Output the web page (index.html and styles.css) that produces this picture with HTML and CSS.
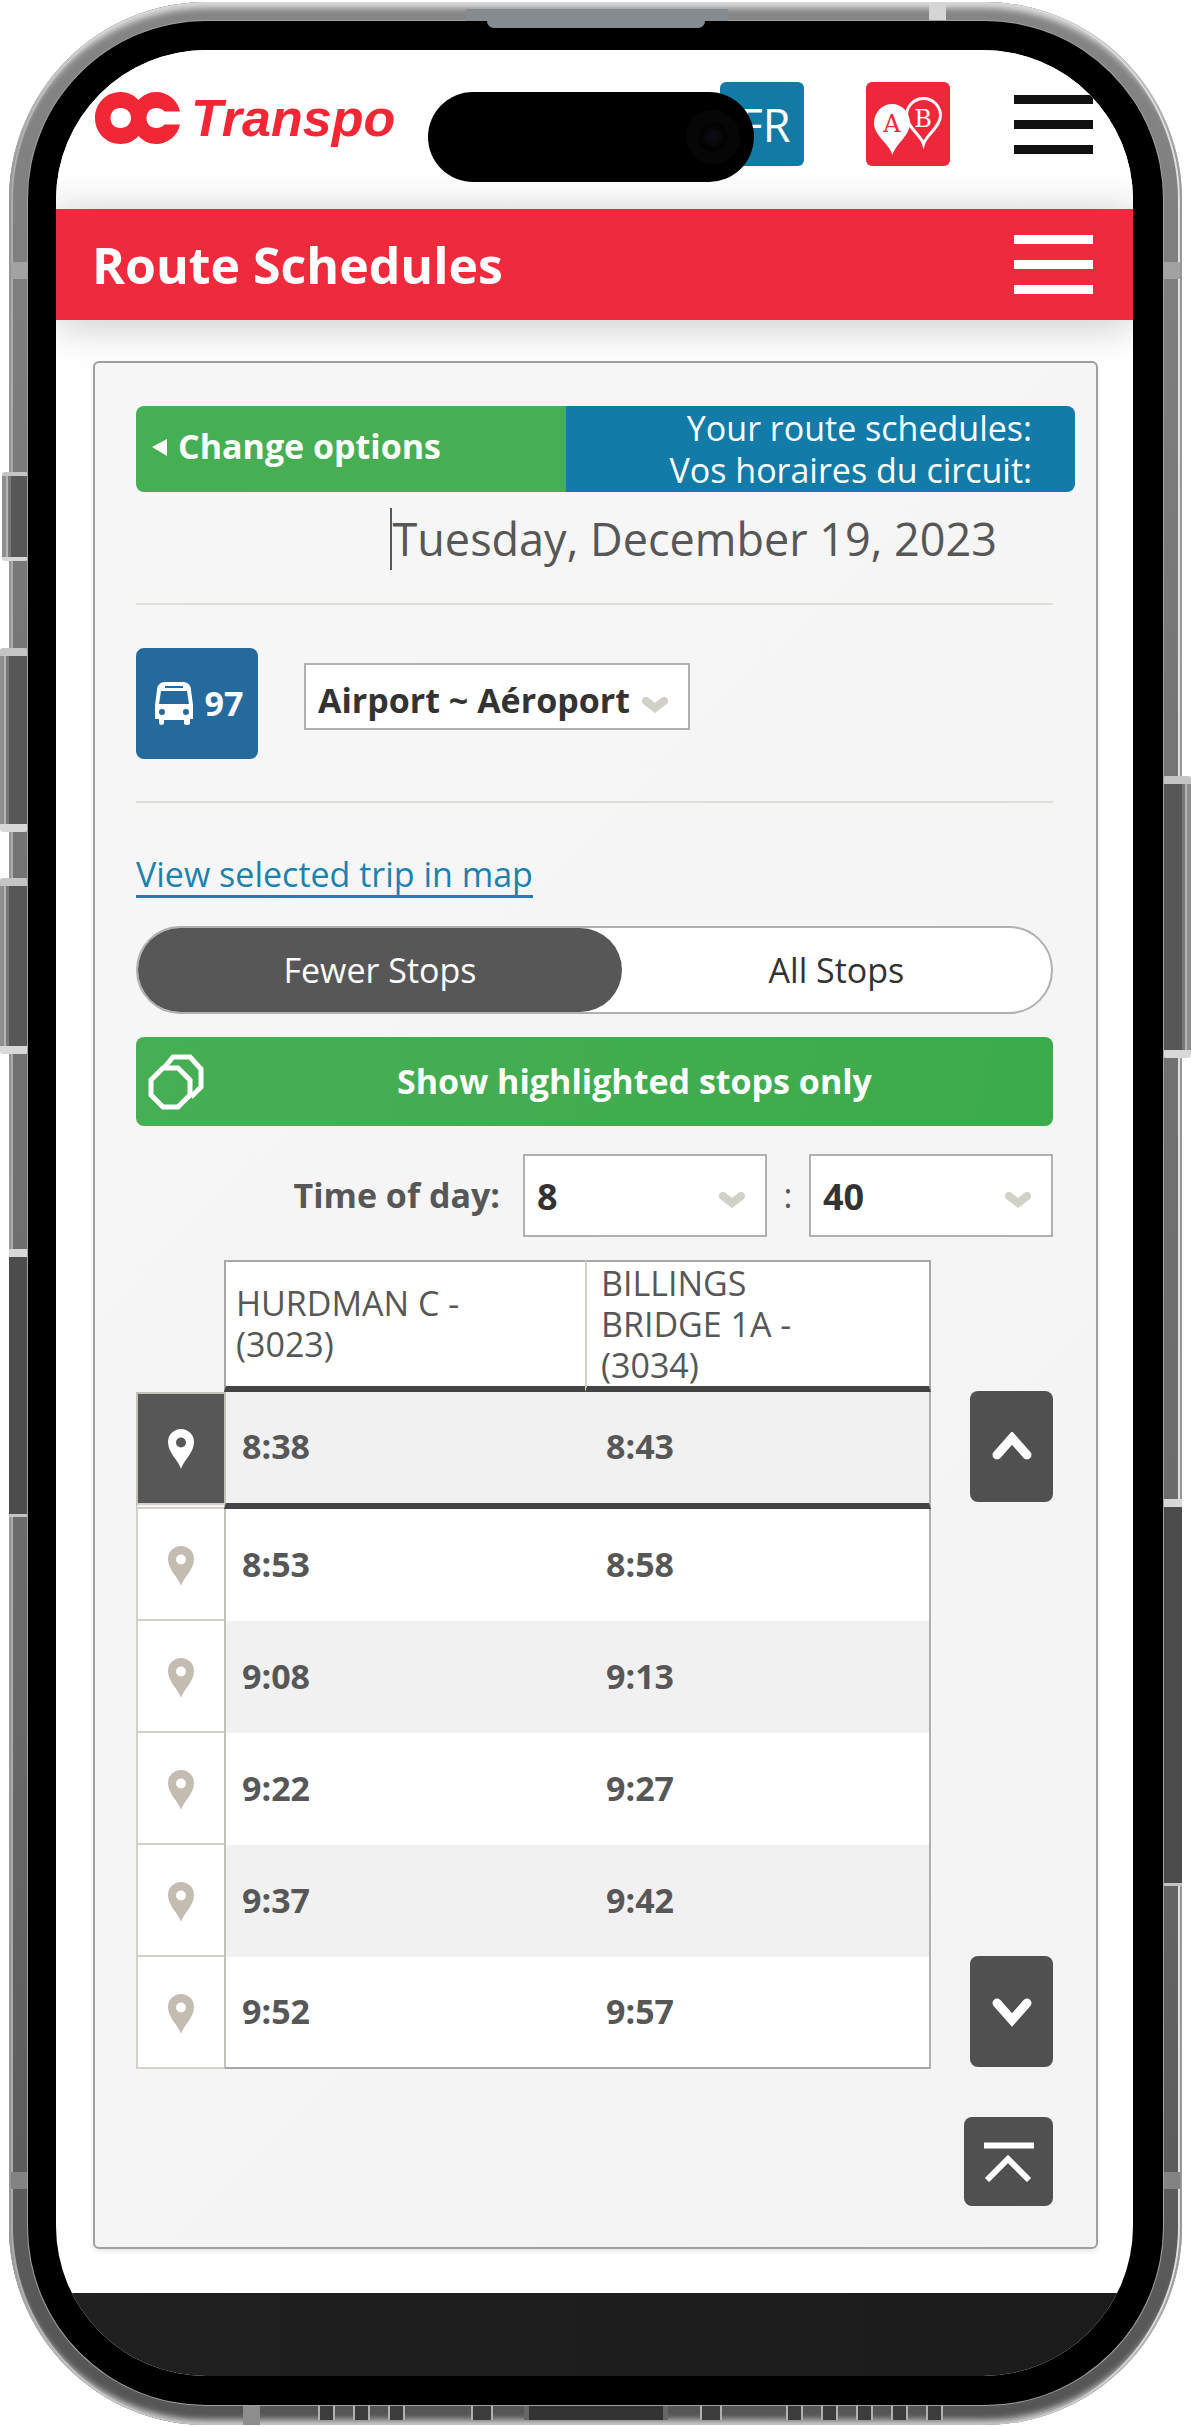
FILE: index.html
```html
<!DOCTYPE html>
<html lang="en">
<head>
<meta charset="utf-8">
<meta name="viewport" content="width=device-width, initial-scale=1">
<title>Route Schedules - OC Transpo</title>
<link rel="stylesheet" href="styles.css">
</head>
<body>
<div class="phone">
  <span class="key key-action"></span>
  <span class="key key-up"></span>
  <span class="key key-down"></span>
  <span class="key key-power"></span>
  <span class="shade shade-left"></span>
  <span class="shade shade-right"></span>
  <span class="band band-l1"></span>
  <span class="band band-l2"></span>
  <span class="band band-r1"></span>
  <span class="band band-r2"></span>
  <span class="band band-top"></span>
  <span class="band band-bottom"></span>
  <span class="ports"><i></i><i></i><i></i><i class="screw"></i><i class="usb"></i><i class="screw"></i><i></i><i></i><i></i><i></i><i></i></span>
  <div class="bezel">
    <span class="speaker"></span>
    <span class="speaker-lip"></span>
    <div class="screen">
      <header class="site-header">
        <a class="logo" href="#" aria-label="OC Transpo">
          <svg class="logo-mark" viewBox="0 0 86 52" aria-hidden="true">
            <path fill="#f22735" fill-rule="evenodd" d="M25.500 0C33 0 39 3 43.500 8C48 3 54 0 61 0C73 0 82.500 8 85 19.500H69.500C67.500 17.200 65 16 61.500 16C55.500 16 51.500 20 51.500 26C51.500 32 55.500 36 61.500 36C65 36 67.500 34.800 69.500 32.500H85C82.500 44 73 52 61 52C54 52 48 49 43.500 44C39 49 33 52 25.500 52C11 52 0 40.500 0 26C0 11.500 11 0 25.500 0ZM25.500 16C19.500 16 15.500 20 15.500 26C15.500 32 19.500 36 25.500 36C31.500 36 36 32 36 26C36 20 31.500 16 25.500 16Z"/>
          </svg>
          <span class="logo-word">Transpo</span>
        </a>
        <button class="lang" type="button">FR</button>
        <button class="planner" type="button" aria-label="Travel planner">
          <svg viewBox="0 0 84 84" aria-hidden="true">
            <path d="M57.500 62C55 53 40.500 45 40.500 33.500A17 17 0 0 1 74.500 33.500C74.500 45 60 53 57.500 62Z" fill="none" stroke="#fff" stroke-width="3"/>
            <path d="M26.500 73C23 61 8 54 8 41A18 19 0 0 1 44 41C44 54 30 61 26.500 73Z" fill="#fff"/>
            <text class="pin-letter" x="26" y="50" fill="#ee273a">A</text>
            <text class="pin-letter" x="57" y="45" fill="#fff">B</text>
          </svg>
        </button>
        <button class="burger burger-dark" type="button" aria-label="Main menu"><span></span><span></span><span></span></button>
      </header>
      <div class="title-bar">
        <h1>Route Schedules</h1>
        <button class="burger" type="button" aria-label="Section menu"><span></span><span></span><span></span></button>
      </div>
      <main>
        <section class="panel">
          <div class="options-bar">
            <a class="change" href="#"><svg viewBox="0 0 18 20" aria-hidden="true"><path d="M2 11 17 3V20Z" fill="#fff"/></svg>Change options</a>
            <p class="intro">Your route schedules:<br>Vos horaires du circuit:</p>
          </div>
          <p class="date"><span>Tuesday, December 19, 2023</span></p>
          <div class="route">
            <span class="badge">
              <svg viewBox="0 0 38 43" aria-hidden="true">
                <path fill="#fff" fill-rule="evenodd" d="M9 0H29C34 1 36 4 36 8L38 23V37H35V41Q35 43 32 43Q29 43 29 41V38H9V41Q9 43 6.500 43Q4 43 4 41V37H0V23L2 8C2 4 4 1 9 0ZM10 4V6H28V4ZM6 9 4 22H34L32 9ZM7 27A3 3 0 1 0 7 33A3 3 0 1 0 7 27ZM31 27A3 3 0 1 0 31 33A3 3 0 1 0 31 27Z"/>
              </svg>
              97
            </span>
            <select class="select direction" aria-label="Direction"><option>Airport ~ Aéroport</option></select>
          </div>
          <a class="map-link" href="#">View selected trip in map</a>
          <div class="toggle" role="radiogroup" aria-label="Stops shown">
            <input type="radio" name="stops" id="fewer" checked><label for="fewer">Fewer Stops</label>
            <input type="radio" name="stops" id="all"><label for="all">All Stops</label>
          </div>
          <button class="highlight" type="button">
            <svg viewBox="0 0 56 56" aria-hidden="true">
              <path d="M16 14 25 3H42L53 15V33L43 43" fill="none" stroke="#fff" stroke-width="5"/>
              <path d="M15 14H30L42 26V41L30 53H15L3 41V26Z" fill="none" stroke="#fff" stroke-width="5"/>
            </svg>
            <span>Show highlighted stops only</span>
          </button>
          <div class="time">
            <label for="hour">Time of day:</label>
            <select class="select" id="hour"><option>8</option></select>
            <span>:</span>
            <select class="select" id="minute" aria-label="Minutes"><option>40</option></select>
          </div>
          <div class="schedule">
            <table>
              <thead>
                <tr><td class="corner"></td><th scope="col">HURDMAN C - (3023)</th><th scope="col">BILLINGS BRIDGE 1A - (3034)</th></tr>
              </thead>
              <tbody>
                <tr class="selected"><td class="pin"><button type="button" aria-label="Trip 8:38"><svg viewBox="0 0 26 40"><use href="#pin"/></svg></button></td><td>8:38</td><td>8:43</td></tr>
                <tr><td class="pin"><button type="button" aria-label="Trip 8:53"><svg viewBox="0 0 26 40"><use href="#pin"/></svg></button></td><td>8:53</td><td>8:58</td></tr>
                <tr><td class="pin"><button type="button" aria-label="Trip 9:08"><svg viewBox="0 0 26 40"><use href="#pin"/></svg></button></td><td>9:08</td><td>9:13</td></tr>
                <tr><td class="pin"><button type="button" aria-label="Trip 9:22"><svg viewBox="0 0 26 40"><use href="#pin"/></svg></button></td><td>9:22</td><td>9:27</td></tr>
                <tr><td class="pin"><button type="button" aria-label="Trip 9:37"><svg viewBox="0 0 26 40"><use href="#pin"/></svg></button></td><td>9:37</td><td>9:42</td></tr>
                <tr><td class="pin"><button type="button" aria-label="Trip 9:52"><svg viewBox="0 0 26 40"><use href="#pin"/></svg></button></td><td>9:52</td><td>9:57</td></tr>
              </tbody>
            </table>
            <div class="steps">
              <button class="step" type="button" aria-label="Earlier trips"><svg viewBox="0 0 40 30"><path d="M5 23 20 6 35 23"/></svg></button>
              <button class="step" type="button" aria-label="Later trips"><svg viewBox="0 0 40 30"><path d="M5 6 20 23 35 6"/></svg></button>
            </div>
          </div>
          <button class="top" type="button" aria-label="Back to top"><svg viewBox="0 0 50 40"><path d="M0 3.500H50M3 38 24 17 45 38"/></svg></button>
        </section>
      </main>
      <footer></footer>
    </div>
    <span class="island"><i></i></span>
  </div>
</div>
<svg class="defs" aria-hidden="true">
  <symbol id="pin" viewBox="0 0 26 40"><path fill-rule="evenodd" d="M13 40C11 32 0 24 0 13A13 13 0 0 1 26 13C26 24 15 32 13 40ZM13 8.500A5 5 0 1 0 13 18.500A5 5 0 1 0 13 8.500Z"/></symbol>
</svg>
</body>
</html>
```
FILE: styles.css
```css
* { box-sizing: border-box; }

body {
  margin: 0;
  padding: 2px 9px 0;
  background: #fff;
  color: #575757;
  font: 400 34px/41px "Open Sans", "Noto Sans", sans-serif;
}

h1, p { margin: 0; }
button { margin: 0; padding: 0; border: 0; font: inherit; cursor: pointer; }
svg { display: block; }
.defs { position: absolute; width: 0; height: 0; }

/* Phone body */
.phone {
  position: relative;
  padding: 19px 19px 20px;
  border-radius: 198px;
  background: linear-gradient(#858585, #757575 30%, #696969 70%, #555);
  box-shadow:
    inset 0 10px 6px -4px #dcdcdc,
    inset 0 -8px 6px -3px #cfcfcf,
    inset 2px 0 0 #8a8a8a,
    inset 4px 0 0 #aaa,
    inset -2px 0 0 #8a8a8a,
    inset -4px 0 0 #e0e0e0;
}
.bezel {
  position: relative;
  padding: 29px 30px 29px 28px;
  border-radius: 178px;
  background: #000;
  box-shadow: 0 0 0 1px #a0a0a0;
}
.screen {
  border-radius: 150px;
  overflow: hidden;
  background: #fff;
}

.key, .shade, .band, .ports, .speaker, .speaker-lip, .island { position: absolute; }
.key {
  border-top: 8px solid #c5c5c5;
  border-bottom: 8px solid #d8d8d8;
  border-radius: 3px;
  background: linear-gradient(90deg, #8e8e8e 0 4px, #b5b5b5 4px 6px, #777 6px 9px, #575757 9px);
}
.key-action { left: -7px; top: 470px; width: 26px; height: 89px; border-width: 4px 0; }
.key-up { left: -9px; top: 646px; width: 28px; height: 184px; }
.key-down { left: -9px; top: 876px; width: 28px; height: 176px; }
.key-power { right: -9px; top: 774px; width: 28px; height: 282px; transform: scaleX(-1); }
.shade {
  width: 19px;
  border-top: 8px solid #d8d8d8;
  border-bottom: 3px solid #c4c4c4;
  background: #4c4c4c;
}
.shade-left { left: 0; top: 1247px; height: 268px; }
.shade-right { right: 0; top: 1497px; height: 387px; }
.band { background: #a2a2a2; }
.band-l1, .band-l2, .band-r1, .band-r2 { width: 17px; height: 17px; }
.band-l1, .band-l2 { left: 2px; }
.band-r1, .band-r2 { right: 2px; }
.band-l1, .band-r1 { top: 260px; }
.band-l2, .band-r2 { bottom: 236px; background: #838383; }
.band-top { right: 236px; top: 0; width: 17px; height: 20px; background: #d5d5d5; }
.band-bottom { left: 234px; bottom: 0; width: 17px; height: 20px; background: #8e8e8e; }
.ports {
  left: 309px;
  bottom: 5px;
  height: 15px;
  display: flex;
  gap: 18px;
}
.ports i { width: 17px; border: solid #b0b0b0; border-width: 0 2px; background: #3c3c3c; }
.ports .screw { width: 22px; margin: 0 13px 0 48px; }
.ports .usb { width: 144px; border-width: 0 5px; border-color: #666; background: #333; }
.ports .usb + .screw { margin: 0 46px 0 14px; }

.speaker {
  left: calc(50% - 130px);
  top: -12px;
  width: 262px;
  height: 12px;
  background: #868b8f;
}
.speaker-lip {
  left: calc(50% - 109px);
  top: 0;
  width: 218px;
  height: 7px;
  border-radius: 0 0 7px 7px;
  background: #868b8f;
}
.island {
  left: calc(50% - 168px);
  top: 71px;
  width: 326px;
  height: 90px;
  border-radius: 45px;
  background: #000;
}
.island i {
  position: absolute;
  right: 14px;
  top: 18px;
  width: 54px;
  height: 54px;
  border-radius: 50%;
  background: radial-gradient(circle, #0b0a12 0 5px, #020203 11px 13px, #060606 16px);
}

/* Header */
.site-header {
  display: flex;
  align-items: flex-start;
  padding: 32px 40px 43px 39px;
  background: linear-gradient(#fff 75%, #f8f8f8);
}
.logo {
  display: flex;
  align-items: center;
  gap: 10px;
  margin-right: auto;
  padding-top: 6px;
  color: #f22735;
  text-decoration: none;
}
.logo-mark { width: 86px; height: 52px; }
.logo-word { font: italic 700 52px/60px "Liberation Sans", Arial, sans-serif; }
.lang, .planner { width: 84px; height: 84px; border-radius: 6px; color: #fff; }
.lang { margin-right: 62px; padding-left: 6px; background: #137aa6; font-size: 45px; }
.planner { margin-right: 64px; background: #ee273a; }
.pin-letter { font: 24px "DejaVu Serif", serif; text-anchor: middle; }
.burger {
  display: flex;
  flex-direction: column;
  justify-content: center;
  gap: 16px;
  width: 79px;
  height: 84px;
  background: none;
}
.burger span { height: 9px; background: #fff; }
.burger-dark span { background: #111; }

.title-bar {
  position: relative;
  display: flex;
  align-items: center;
  justify-content: space-between;
  height: 111px;
  padding: 0 40px 0 36px;
  background: #ef2a3c;
  box-shadow: 0 8px 40px rgba(0, 0, 0, .2);
}
h1 { color: #fff; font-size: 50px; line-height: 60px; }

/* Panel */
main { padding: 41px 35px 44px 37px; }
.panel {
  padding: 43px 43px 41px 41px;
  border: 2px solid #a0a0a0;
  border-radius: 6px;
  background: linear-gradient(135deg, #f7f7f7, #f3f3f3);
  box-shadow: 0 3px 4px rgba(0, 0, 0, .08);
}
.options-bar {
  display: grid;
  grid-template-columns: 430fr 509fr;
  height: 86px;
  margin-right: -22px;
  border-radius: 8px;
  overflow: hidden;
  color: #fff;
}
.change {
  display: flex;
  align-items: center;
  gap: 10px;
  padding: 0 0 6px 14px;
  background: #46af54;
  color: #fff;
  font-weight: 700;
  text-decoration: none;
}
.change svg { width: 18px; height: 20px; }
.intro { padding: 1px 43px 0 0; background: #127ba7; line-height: 42px; text-align: right; }
.date {
  padding: 16px 56px 33px 0;
  border-bottom: 2px solid #deddd8;
  font-size: 45px;
  line-height: 62px;
  text-align: right;
}
.date span { display: inline-block; border-left: 2px solid #575757; }
.route {
  display: flex;
  align-items: center;
  gap: 46px;
  padding: 43px 0 42px;
  border-bottom: 2px solid #deddd8;
}
.badge {
  display: flex;
  align-items: center;
  justify-content: center;
  gap: 12px;
  width: 122px;
  height: 111px;
  padding-left: 4px;
  border-radius: 8px;
  background: #256a9c;
  color: #fff;
  font-weight: 700;
}
.badge svg { width: 38px; height: 43px; }
.select {
  appearance: none;
  width: 244px;
  height: 83px;
  margin: 0;
  padding: 2px 12px 0;
  border: 2px solid #b0b0b0;
  border-radius: 0;
  color: #333;
  font: 700 36px/46px "Open Sans", "Noto Sans", sans-serif;
  background: #fff url("data:image/svg+xml,%3Csvg xmlns='http://www.w3.org/2000/svg' width='26' height='16'%3E%3Cpath d='M4 4 13 11 22 4' fill='none' stroke='%23d3d0c8' stroke-width='8' stroke-linecap='round'/%3E%3C/svg%3E") no-repeat right 20px top 36px;
}
.direction {
  width: 386px;
  height: 67px;
  margin-bottom: 14px;
  padding-top: 6px;
  font-size: 34px;
  background-position: right 20px top 32px;
}

.map-link {
  display: table;
  margin: 50px 0 28px;
  border-bottom: 3px solid #1b82ad;
  color: #1b82ad;
  line-height: 42px;
  text-decoration: none;
}
.toggle {
  display: flex;
  height: 88px;
  border: 2px solid #b0b0b0;
  border-radius: 44px;
  background: #fff;
  color: #333;
}
.toggle input { position: absolute; opacity: 0; }
.toggle label {
  flex: 430;
  display: flex;
  align-items: center;
  justify-content: center;
  border-radius: 42px;
}
.toggle label:first-of-type { flex: 485; }
.toggle input:checked + label { background: #575757; color: #fff; }
.highlight {
  display: flex;
  align-items: center;
  width: 100%;
  height: 89px;
  margin-top: 23px;
  padding-left: 12px;
  border-radius: 8px;
  background: linear-gradient(100deg, #46af54, #3cab4b);
  color: #fff;
  font-weight: 700;
}
.highlight svg { width: 56px; height: 56px; }
.highlight span { flex: 1; padding-left: 12px; }
.time {
  display: flex;
  align-items: center;
  justify-content: flex-end;
  margin: 28px 0 23px;
}
.time label { margin-right: 23px; font-weight: 700; }
.time span { width: 42px; text-align: center; }

/* Timetable */
.schedule { display: flex; justify-content: space-between; gap: 39px; }
table { flex: 1; border-spacing: 0; table-layout: fixed; }
th, td { padding: 0; text-align: left; }
th {
  height: 132px;
  padding-right: 80px;
  padding-left: 10px;
  border: solid #a8a8a8;
  border-width: 2px 0 6px 2px;
  border-bottom-color: #444;
  background: #fff;
  font-weight: 400;
}
th:last-child { padding-left: 14px; border-left-color: #d3d0c8; border-right: 2px solid #a8a8a8; }
.corner { width: 88px; }
th:nth-child(2) { width: 361px; }
td:nth-child(n+2) { padding-left: 16px; padding-bottom: 2px; font-weight: 700; background: #fff; }
td:nth-child(2) { border-left: 2px solid #c4c1ba; }
td:last-child { padding-left: 21px; border-right: 2px solid #b0b0b0; }
tbody tr:nth-child(odd) td:nth-child(n+2) { background: #f1f1f1; }
tbody tr.selected td { border-bottom: 6px solid #444; }
tbody tr:last-child td:nth-child(n+2) { border-bottom: 2px solid #a8a8a8; }
.pin {
  border-left: 2px solid #d3d0c8;
  border-bottom: 2px solid #d3d0c8;
  background: #fff;
  color: #c3bcb0;
}
tbody tr.selected .pin {
  border: 2px solid #c4c1ba;
  border-bottom: 6px double #d3d0c8;
  border-right: 0;
  background: #575757 padding-box;
  color: #fff;
}
.pin button { display: block; width: 100%; height: 110px; padding-top: 4px; background: none; color: inherit; }
.selected .pin button { height: 109px; padding-top: 0; }
.pin svg { width: 26px; height: 40px; margin: auto; fill: currentColor; }
.steps {
  display: flex;
  flex-direction: column;
  justify-content: space-between;
  padding: 131px 0 2px;
}
.step, .top { width: 83px; height: 111px; border-radius: 8px; background: #505050; }
.step svg { width: 40px; height: 30px; margin: auto; fill: none; stroke: #fff; stroke-width: 9; stroke-linecap: round; }
.top { display: block; width: 89px; height: 89px; margin: 48px 0 0 auto; }
.top svg { width: 50px; height: 40px; margin: auto; fill: none; stroke: #fff; stroke-width: 6; }

footer { height: 83px; background: linear-gradient(90deg, #202020, #1b1b1b); }
```
